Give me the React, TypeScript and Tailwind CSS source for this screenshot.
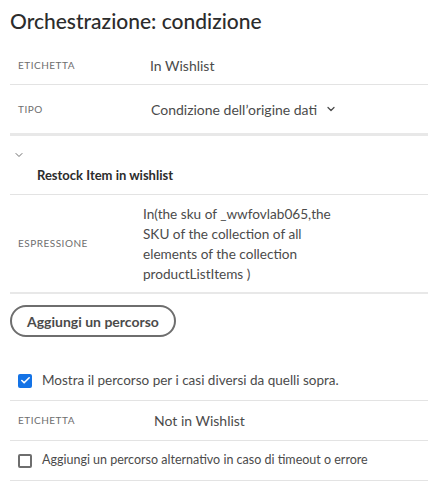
import { Check, ChevronDown } from "lucide-react";

const font = { fontFamily: 'Lato, "Noto Sans", sans-serif' };

function Label({ children }: { children: React.ReactNode }) {
  return (
    <span className="w-[140px] shrink-0 pl-2 text-[10px] tracking-[0.05em] uppercase text-[#6e6e6e]">
      {children}
    </span>
  );
}

export default function App() {
  return (
    <div className="w-[428px] h-[494px] bg-white pl-[10px] overflow-hidden" style={font}>
      <h1 className="h-[47px] pt-[7px] text-[21px] leading-[28px] font-medium text-[#2c2c2c]">
        Orchestrazione: condizione
      </h1>

      <div className="h-[38px] flex items-center border-b border-[#e3e3e3]">
        <Label>Etichetta</Label>
        <span className="text-[14px] text-[#4b4b4b]">In Wishlist</span>
      </div>

      <div className="h-[51px] flex items-center border-b-[3px] border-[#e8e8e8]">
        <Label>Tipo</Label>
        <span className="pl-[1px] text-[14px] text-[#4b4b4b]">Condizione dell’origine dati</span>
        <ChevronDown className="ml-[8px] w-[12px] h-[12px] text-[#4b4b4b]" strokeWidth={2.5} />
      </div>

      <div className="h-[59px] border-b border-[#e3e3e3] pt-[13px]">
        <ChevronDown className="ml-[3px] w-[12px] h-[12px] text-[#6e6e6e]" strokeWidth={2} />
        <div className="pl-[27px] mt-[5px] text-[13px] leading-[18px] font-bold text-[#2c2c2c]">
          Restock Item in wishlist
        </div>
      </div>

      <div className="h-[99px] flex items-center border-b-2 border-[#e8e8e8]">
        <Label>Espressione</Label>
        <span className="-ml-[7px] w-[200px] text-[13.6px] leading-[20px] text-[#4b4b4b]">
          In(the sku of _wwfovlab065,the SKU of the collection of all elements of the collection productListItems )
        </span>
      </div>

      <div className="pt-[11px] h-[67px]">
        <button className="h-[32px] px-[15px] rounded-full border-2 border-[#6e6e6e] text-[14px] font-bold text-[#4b4b4b]">
          Aggiungi un percorso
        </button>
      </div>

      <div className="h-[40px] flex items-center border-b border-[#e3e3e3] pl-2">
        <span className="w-[14px] h-[14px] rounded-[2px] bg-[#1473e6] flex items-center justify-center">
          <Check className="w-[11px] h-[11px] text-white" strokeWidth={3.5} />
        </span>
        <span className="ml-[10px] text-[13.5px] text-[#4b4b4b]">
          Mostra il percorso per i casi diversi da quelli sopra.
        </span>
      </div>

      <div className="h-[40px] flex items-center border-b border-[#e3e3e3]">
        <Label>Etichetta</Label>
        <span className="pl-[4px] text-[14px] text-[#4b4b4b]">Not in Wishlist</span>
      </div>

      <div className="h-[40px] flex items-center border-b border-[#e3e3e3] pl-2">
        <span className="w-[14px] h-[14px] rounded-[2px] border-2 border-[#6e6e6e]" />
        <span className="ml-[10px] text-[12.5px] text-[#4b4b4b]">
          Aggiungi un percorso alternativo in caso di timeout o errore
        </span>
      </div>
    </div>
  );
}
